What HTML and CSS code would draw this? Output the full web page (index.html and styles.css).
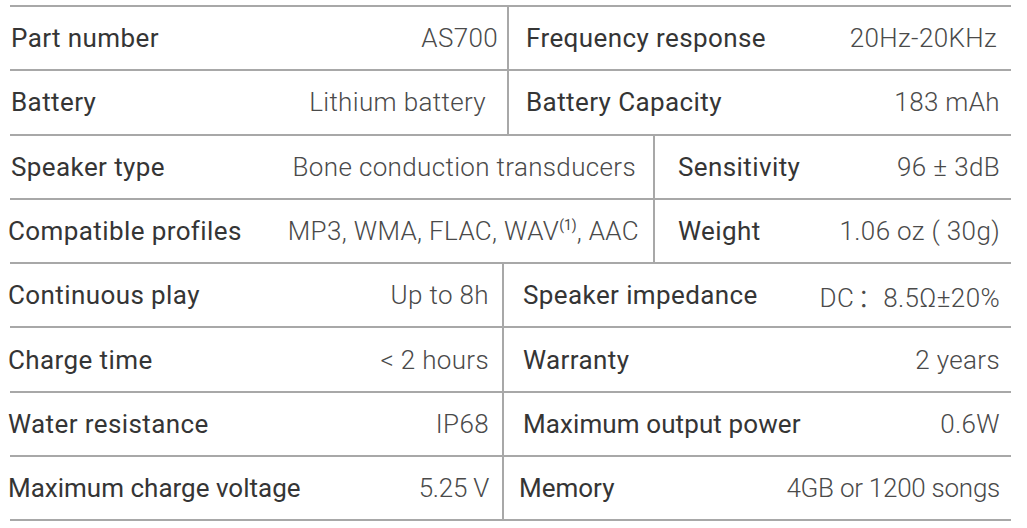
FILE: index.html
```html
<!DOCTYPE html>
<html lang="en">
<head>
<meta charset="utf-8">
<title>Specifications</title>
<link rel="stylesheet" href="styles.css">
</head>
<body>
<div class="specs">
  <div class="row blk-a">
    <div class="cell left"><span class="label">Part number</span><span class="value">AS700</span></div>
    <div class="cell right"><span class="label">Frequency response</span><span class="value v-r3">20Hz-20KHz</span></div>
  </div>
  <div class="row blk-a">
    <div class="cell left"><span class="label">Battery</span><span class="value v-in">Lithium battery</span></div>
    <div class="cell right"><span class="label">Battery Capacity</span><span class="value">183 mAh</span></div>
  </div>
  <div class="row blk-b">
    <div class="cell left"><span class="label">Speaker type</span><span class="value v-r4">Bone conduction transducers</span></div>
    <div class="cell right"><span class="label">Sensitivity</span><span class="value">96 ± 3dB</span></div>
  </div>
  <div class="row blk-b">
    <div class="cell left"><span class="label l-out">Compatible profiles</span><span class="value">MP3, WMA, FLAC, WAV<sup class="sup">(1)</sup>, AAC</span></div>
    <div class="cell right"><span class="label">Weight</span><span class="value">1.06 oz ( 30g)</span></div>
  </div>
  <div class="row blk-c">
    <div class="cell left"><span class="label">Continuous play</span><span class="value">Up to 8h</span></div>
    <div class="cell right"><span class="label">Speaker impedance</span><span class="value">DC<span class="cjk">：</span>8.5Ω±20%</span></div>
  </div>
  <div class="row blk-c">
    <div class="cell left"><span class="label">Charge time</span><span class="value">&lt; 2 hours</span></div>
    <div class="cell right"><span class="label">Warranty</span><span class="value">2 years</span></div>
  </div>
  <div class="row blk-c">
    <div class="cell left"><span class="label">Water resistance</span><span class="value">IP68</span></div>
    <div class="cell right"><span class="label snug">Maximum output power</span><span class="value">0.6W</span></div>
  </div>
  <div class="row blk-c tight">
    <div class="cell left"><span class="label">Maximum charge voltage</span><span class="value">5.25 V</span></div>
    <div class="cell right r-in"><span class="label">Memory</span><span class="value">4GB or 1200 songs</span></div>
  </div>
</div>
</body>
</html>
```

FILE: styles.css
```css
html, body {
  margin: 0;
  padding: 0;
  background: #ffffff;
}

body {
  font-family: Roboto, "Noto Sans", "Noto Sans CJK SC", sans-serif;
  font-size: 26px;
  color: #333333;
}

.specs {
  width: 1001px;
  margin: 5px 0 0 10px;
  border-bottom: 2px solid #a8a8a8;
}

.row {
  display: grid;
  height: 64.31px;
  box-sizing: border-box;
  border-top: 2px solid #a8a8a8;
}

.blk-a { grid-template-columns: 497px 1fr; }
.blk-b { grid-template-columns: 643px 1fr; }
.blk-c { grid-template-columns: 492px 1fr; }

.cell {
  display: flex;
  align-items: center;
  justify-content: space-between;
  white-space: nowrap;
  min-width: 0;
}

.right {
  border-left: 2px solid #a8a8a8;
}

.label {
  font-weight: 400;
  color: #353535;
  letter-spacing: 0.4px;
}

.value {
  font-weight: 300;
  color: #4a4a4a;
  letter-spacing: 0.35px;
}

.tight .label,
.tight .value {
  letter-spacing: 0;
}

.tight .value {
  letter-spacing: -0.25px;
}

.label.snug {
  letter-spacing: 0.1px;
}

.cjk {
  font-family: "Noto Sans CJK SC", sans-serif;
  font-weight: 300;
  letter-spacing: 0;
  margin-left: 3px;
}

/* block A: rows 1-2 */
.blk-a .left { padding: 0 9px 0 1px; }
.blk-a .right { padding: 0 11px 0 17px; }

/* block B: rows 3-4 */
.blk-b .left { padding: 0 14px 0 1px; }
.blk-b .right { padding: 0 11px 0 23px; }

/* block C: rows 5-8 */
.blk-c .left { padding: 0 13px 0 0; }
.blk-c .right { padding: 0 11px 0 19px; }
.blk-c .left .label { margin-left: -2px; }

.v-in { margin-right: 12px; }
.v-r3 { margin-right: 3px; }
.v-r4 { margin-right: 3px; }
.l-out { margin-left: -3px; }
.blk-c .r-in { padding-left: 15px; }

.sup {
  font-size: 14px;
  font-weight: 400;
  vertical-align: 10px;
  line-height: 0;
  letter-spacing: 0;
}
```
